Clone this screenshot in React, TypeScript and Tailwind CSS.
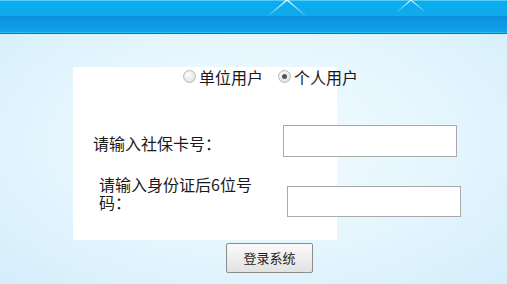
import React, { useState } from 'react';

// Sparkle on the header band
const Sparkle = ({ className, size }: { className: string; size: number }) => (
  <svg className={className} width={size * 2} height={size} viewBox="0 0 40 20">
    <defs>
      <radialGradient id="glow" cx="50%" cy="0%" r="50%">
        <stop offset="0%" stopColor="#ffffff" stopOpacity="1" />
        <stop offset="40%" stopColor="#ffffff" stopOpacity="0.7" />
        <stop offset="100%" stopColor="#ffffff" stopOpacity="0" />
      </radialGradient>
      <linearGradient id="rayL" x1="1" y1="0" x2="0" y2="1">
        <stop offset="0%" stopColor="#ffffff" stopOpacity="0.95" />
        <stop offset="100%" stopColor="#ffffff" stopOpacity="0.05" />
      </linearGradient>
      <linearGradient id="rayR" x1="0" y1="0" x2="1" y2="1">
        <stop offset="0%" stopColor="#ffffff" stopOpacity="0.95" />
        <stop offset="100%" stopColor="#ffffff" stopOpacity="0.05" />
      </linearGradient>
    </defs>
    <ellipse cx="20" cy="0" rx="11" ry="6" fill="url(#glow)" />
    <path d="M20 0 L1 16" stroke="url(#rayL)" strokeWidth="1.4" />
    <path d="M20 0 L39 16" stroke="url(#rayR)" strokeWidth="1.4" />
  </svg>
);

const Radio = ({ checked }: { checked: boolean }) => (
  <span className="flex h-[13px] w-[13px] items-center justify-center rounded-full border border-[#b9b9b9] bg-[radial-gradient(circle_at_40%_35%,#ffffff_0%,#e4e4e4_70%,#d0d0d0_100%)]">
    {checked && <span className="h-[5px] w-[5px] rounded-full bg-[#555555]" />}
  </span>
);

const App = () => {
  const [userType, setUserType] = useState<'unit' | 'person'>('person');

  return (
    <div className="min-h-[284px] w-full overflow-hidden bg-[radial-gradient(ellipse_at_center,#f2fbff_0%,#e8f7fe_45%,#d4eefb_100%)] font-['Noto_Sans_CJK_SC','Liberation_Sans',sans-serif] text-[16px] text-[#1a1a1a]">
      {/* Header band */}
      <div className="relative h-[34px] w-full">
        <div className="h-[1px] bg-[#56cdf9]" />
        <div className="h-[15px] bg-[linear-gradient(to_bottom,#08aef1,#10a9ec)]" />
        <div className="h-[16px] bg-[linear-gradient(to_bottom,#0a8fdf,#10a2ec)]" />
        <div className="h-[1px] bg-[#27bdf9]" />
        <div className="h-[1px] bg-[#0a76c2]" />
        <Sparkle className="absolute left-[267px] top-0" size={20} />
        <Sparkle className="absolute left-[396px] top-0" size={15} />
      </div>

      {/* Login form */}
      <div className="ml-[73px] mt-[33px] w-[388px]">
        <div className="h-[173px] bg-[linear-gradient(to_right,#ffffff_264px,transparent_264px)]">
          <div className="flex h-[19px] items-center pl-[110px] leading-[18px]">
            <label className="flex items-center gap-[3px]" onClick={() => setUserType('unit')}>
              <Radio checked={userType === 'unit'} />
              <span>单位用户</span>
            </label>
            <label className="ml-[15px] flex items-center gap-[3px]" onClick={() => setUserType('person')}>
              <Radio checked={userType === 'person'} />
              <span>个人用户</span>
            </label>
          </div>

          <div className="mt-[39px] flex items-start">
            <span className="ml-[20px] mt-[9px] w-[190px] leading-[18px]">请输入社保卡号：</span>
            <input className="h-[32px] w-[174px] border border-[#a9a9a9] bg-white px-1 outline-none" />
          </div>

          <div className="mt-[29px] flex items-start">
            <span className="-mt-[11px] ml-[26px] w-[188px] pr-[30px] leading-[18px]">请输入身份证后6位号码：</span>
            <input className="h-[31px] w-[174px] border border-[#a9a9a9] bg-white px-1 outline-none" />
          </div>
        </div>

        <button className="ml-[153px] mt-[3px] h-[30px] w-[87px] rounded-[2px] border border-[#8c8c8c] bg-[linear-gradient(to_bottom,#fafafa,#e2e2e2)] text-[13px] text-[#222222]">
          登录系统
        </button>
      </div>
    </div>
  );
};

export default App;
